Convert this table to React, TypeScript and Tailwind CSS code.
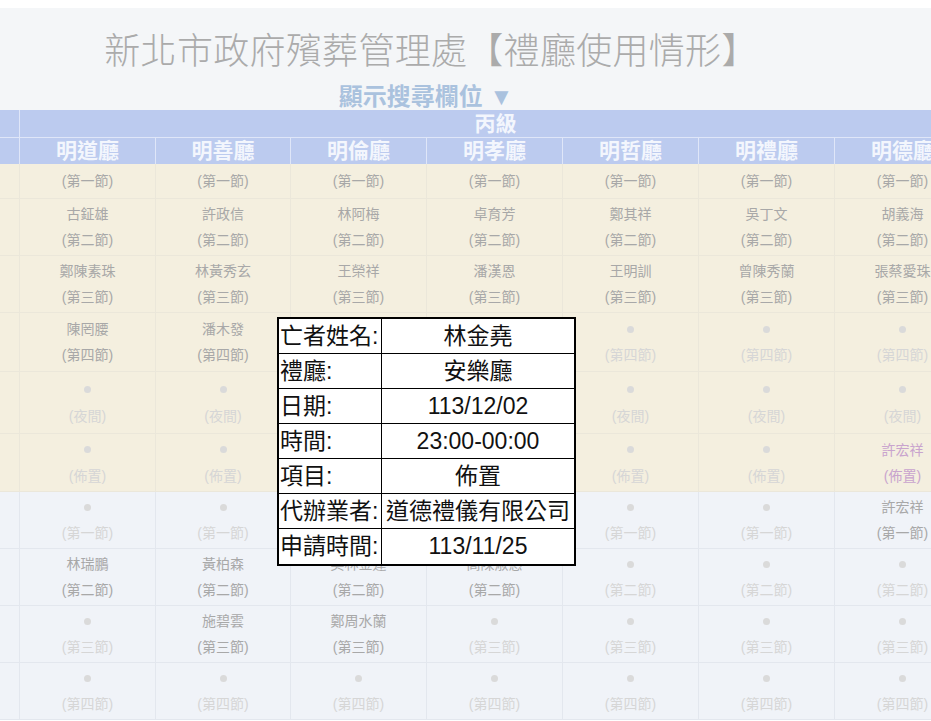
import React from "react";

const FONT = { fontFamily: '"Liberation Sans", "Noto Sans CJK TC", sans-serif' };

const cols = ["明道廳", "明善廳", "明倫廳", "明孝廳", "明哲廳", "明禮廳", "明德廳"];
const widths = ["w-[136px]", "w-[135px]", "w-[136px]", "w-[136px]", "w-[136px]", "w-[136px]", "w-[136px]"];

type Row = {
  sec: string;
  h: string;
  names: (string | null)[];
  purple?: number;
  noName?: boolean;
  hidden?: number[];
};

const N7 = [null, null, null, null, null, null, null];

const yellowRows: Row[] = [
  { sec: "第一節", h: "h-[35px]", names: N7, noName: true },
  { sec: "第二節", h: "h-[57px]", names: ["古鉦雄", "許政信", "林阿梅", "卓育芳", "鄭其祥", "吳丁文", "胡義海"] },
  { sec: "第三節", h: "h-[57px]", names: ["鄭陳素珠", "林黃秀玄", "王榮祥", "潘漢恩", "王明訓", "曾陳秀蘭", "張蔡愛珠"] },
  { sec: "第四節", h: "h-[59px]", names: ["陳罔腰", "潘木發", null, null, null, null, null], hidden: [2, 3] },
  { sec: "夜間", h: "h-[62px]", names: N7, hidden: [2, 3] },
  { sec: "佈置", h: "h-[58px]", names: [null, null, null, null, null, null, "許宏祥"], purple: 6, hidden: [2, 3] },
];

const blueRows: Row[] = [
  { sec: "第一節", h: "h-[57px]", names: [null, null, null, null, null, null, "許宏祥"], hidden: [2, 3] },
  { sec: "第二節", h: "h-[57px]", names: ["林瑞鵬", "黃柏森", "吳林金蓮", "高陳淑惠", null, null, null] },
  { sec: "第三節", h: "h-[57px]", names: [null, "施碧雲", "鄭周水蘭", null, null, null, null] },
  { sec: "第四節", h: "h-[57px]", names: N7 },
];

function CellContent({ name, sec, purple, noName }: { name: string | null; sec: string; purple?: boolean; noName?: boolean }) {
  if (noName) {
    return <div className="leading-[26px] text-[#a8a8a8]">({sec})</div>;
  }
  if (name) {
    return (
      <div className={purple ? "text-[#c9a4ce]" : "text-[#a8a8a8]"}>
        <div className="leading-[26px]">{name}</div>
        <div className="leading-[26px]">({sec})</div>
      </div>
    );
  }
  return (
    <div className="text-[#d6d6d6]">
      <div className="h-[26px] flex items-center justify-center">
        <span className="block w-[7px] h-[7px] rounded-full bg-[#dadada]" />
      </div>
      <div className="leading-[26px]">({sec})</div>
    </div>
  );
}

function BodyRow({ row, bg, line }: { row: Row; bg: string; line: string }) {
  return (
    <div className={`flex ${row.h} ${bg} border-b ${line}`}>
      <div className={`w-[20px] shrink-0 border-r ${line}`} />
      {row.names.map((n, i) => (
        <div
          key={i}
          className={`${widths[i]} shrink-0 border-r ${line} flex items-center justify-center text-center text-[14px]`}
        >
          {row.hidden && row.hidden.includes(i) ? null : (
            <CellContent name={n} sec={row.sec} purple={row.purple === i} noName={row.noName} />
          )}
        </div>
      ))}
    </div>
  );
}

const popupRows: [string, string][] = [
  ["亡者姓名:", "林金堯"],
  ["禮廳:", "安樂廳"],
  ["日期:", "113/12/02"],
  ["時間:", "23:00-00:00"],
  ["項目:", "佈置"],
  ["代辦業者:", "道德禮儀有限公司"],
  ["申請時間:", "113/11/25"],
];

export default function App() {
  return (
    <div className="relative w-[931px] h-[721px] overflow-hidden bg-white" style={FONT}>
      <div className="h-[8px] bg-white" />
      <div className="bg-[#f4f6f8] h-[102px] w-full">
        <div className="w-[846px] pt-[22px] text-center">
          <div className="pl-[16px] text-[36px] leading-[44px] font-light tracking-[0.3px] text-[#ababab] whitespace-nowrap">
            新北市政府殯葬管理處【禮廳使用情形】
          </div>
          <div className="pl-[6px] mt-[10px] text-[24px] leading-[26px] font-bold text-[#aac2de] whitespace-nowrap">
            顯示搜尋欄位 ▼
          </div>
        </div>
      </div>

      <div className="w-[971px]">
        <div className="flex h-[28px] bg-[#bccbef] border-b border-[#dfe6f8]">
          <div className="w-[20px] shrink-0 border-r border-[#dfe6f8]" />
          <div className="flex-1 text-center text-[21px] leading-[27px] text-[#f3f6fd] font-bold">丙級</div>
        </div>
        <div className="flex h-[26px] bg-[#bccbef]">
          <div className="w-[20px] shrink-0 border-r border-[#dfe6f8]" />
          {cols.map((c, i) => (
            <div
              key={c}
              className={`${widths[i]} shrink-0 border-r border-[#dfe6f8] text-center text-[21px] leading-[26px] font-bold text-[#f3f6fd] whitespace-nowrap`}
            >
              {c}
            </div>
          ))}
        </div>

        {yellowRows.map((r, i) => (
          <BodyRow key={"y" + i} row={r} bg="bg-[#f4efdf]" line="border-[#ebe7da]" />
        ))}
        {blueRows.map((r, i) => (
          <BodyRow key={"b" + i} row={r} bg="bg-[#f0f3f8]" line="border-[#e3e7ee]" />
        ))}
      </div>

      <div className="absolute left-[277px] top-[317px] w-[299px] bg-white border-2 border-black text-[23px] text-[#111]">
        {popupRows.map(([k, v], i) => (
          <div key={k} className={`flex h-[35px] ${i < popupRows.length - 1 ? "border-b border-black" : ""}`}>
            <div className="w-[103px] shrink-0 border-r border-black pl-[1px] leading-[34px] whitespace-nowrap">{k}</div>
            <div className="flex-1 text-center leading-[34px] whitespace-nowrap">{v}</div>
          </div>
        ))}
      </div>
    </div>
  );
}
